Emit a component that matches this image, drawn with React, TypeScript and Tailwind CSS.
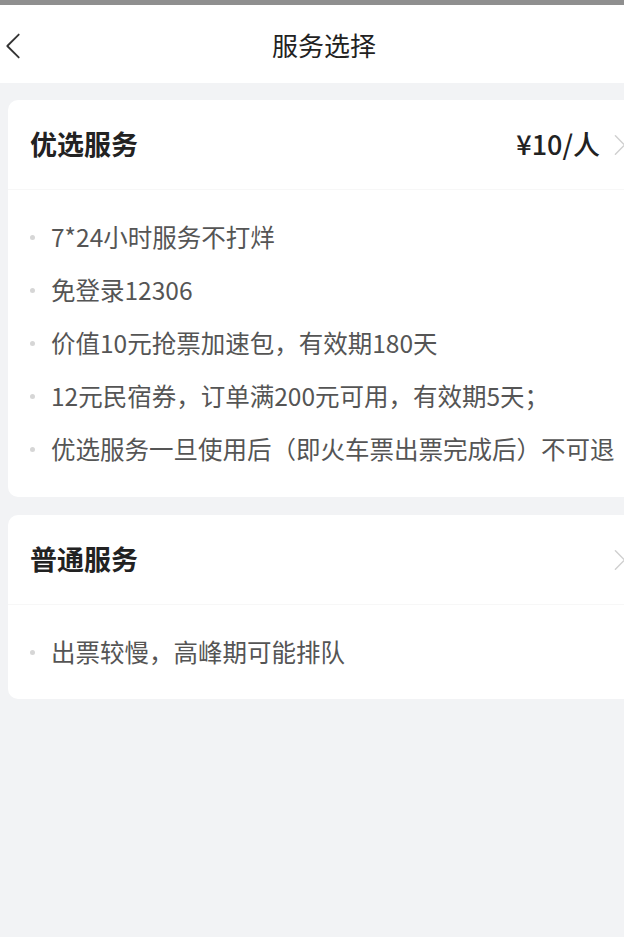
import React from 'react';

const font = { fontFamily: '"Noto Sans CJK SC", "Noto Sans", sans-serif' };

const Chevron: React.FC<{ className?: string }> = ({ className }) => (
  <svg viewBox="0 0 14 24" className={className} fill="none" stroke="currentColor" strokeWidth={1.6} strokeLinecap="round" strokeLinejoin="round">
    <path d="M2 2 L12 12 L2 22" />
  </svg>
);

const Bullet: React.FC<{ text: string }> = ({ text }) => (
  <li className="flex items-center h-[53px]">
    <span className="w-[5px] h-[5px] rounded-full bg-[#d6d6d6] ml-[22px] mr-[16px] shrink-0" />
    <span className="text-[24.5px] text-[#555555] whitespace-nowrap">{text}</span>
  </li>
);

const ServiceCard: React.FC<{ title: string; price?: string; items: string[]; pb: string }> = ({ title, price, items, pb }) => (
  <section className={`bg-white ml-2 mr-[-16px] rounded-[10px] ${pb}`}>
    <div className="flex items-center h-[90px] pl-[22px] pr-3 border-b border-[#f7f7f7]">
      <h2 className="text-[27px] font-bold text-[#222222] flex-1">{title}</h2>
      {price && <span className="text-[27px] font-medium text-[#222222] mr-3">{price}</span>}
      <Chevron className="w-[16px] h-[22px] text-[#d0d0d0]" />
    </div>
    <ul className="pt-[21px]">
      {items.map((t) => (
        <Bullet key={t} text={t} />
      ))}
    </ul>
  </section>
);

export default function App() {
  return (
    <div className="min-h-[937px] bg-[#f2f3f5] overflow-hidden" style={font}>
      <div className="h-[5px] bg-[#8f8f8f]" />
      <header className="h-[78px] bg-white flex items-center relative">
        <Chevron className="absolute left-[5px] top-[27px] w-[16px] h-[28px] text-[#333333] rotate-180" />
        <h1 className="flex-1 text-center pl-6 text-[26px] text-[#222222]">服务选择</h1>
      </header>
      <div className="pt-[17px] flex flex-col gap-[18px]">
        <ServiceCard
          title="优选服务"
          price="¥10/人"
          pb="pb-[21px]"
          items={[
            '7*24小时服务不打烊',
            '免登录12306',
            '价值10元抢票加速包，有效期180天',
            '12元民宿券，订单满200元可用，有效期5天；',
            '优选服务一旦使用后（即火车票出票完成后）不可退',
          ]}
        />
        <ServiceCard title="普通服务" pb="pb-[20px]" items={['出票较慢，高峰期可能排队']} />
      </div>
    </div>
  );
}
